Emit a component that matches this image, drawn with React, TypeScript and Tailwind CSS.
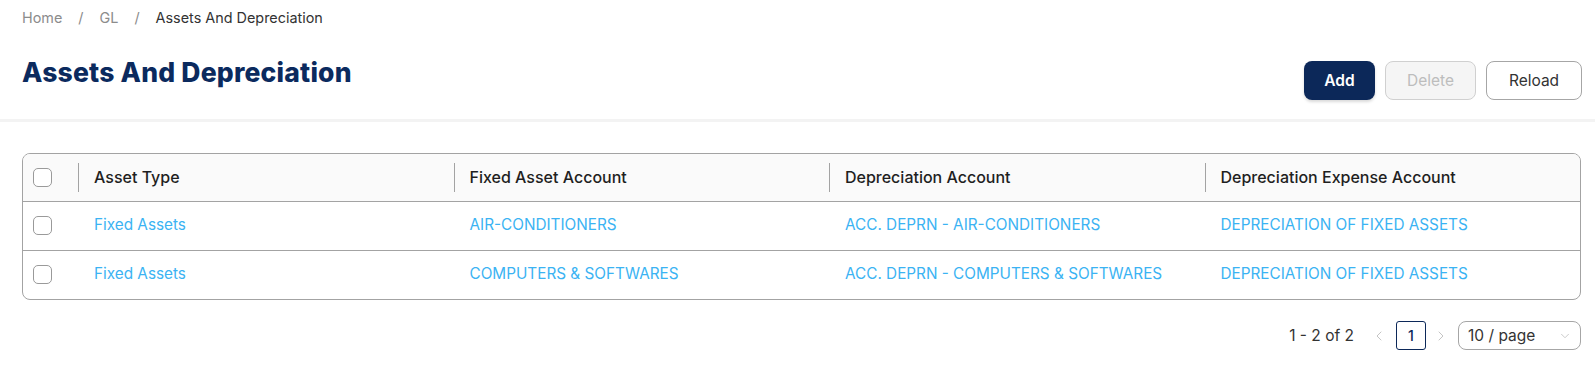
import { ChevronLeft, ChevronRight, ChevronDown } from 'lucide-react';

const rows = [
  {
    type: 'Fixed Assets',
    fixed: 'AIR-CONDITIONERS',
    deprn: 'ACC. DEPRN - AIR-CONDITIONERS',
    expense: 'DEPRECIATION OF FIXED ASSETS',
  },
  {
    type: 'Fixed Assets',
    fixed: 'COMPUTERS & SOFTWARES',
    deprn: 'ACC. DEPRN - COMPUTERS & SOFTWARES',
    expense: 'DEPRECIATION OF FIXED ASSETS',
  },
];

const columns = ['Asset Type', 'Fixed Asset Account', 'Depreciation Account', 'Depreciation Expense Account'];

function Checkbox() {
  return <div className="w-[19px] h-[19px] rounded-[5px] border border-[#9a9a9a] bg-white" />;
}

function App() {
  return (
    <div className="w-full min-h-screen bg-white text-[#1f1f1f]" style={{ fontFamily: 'Inter, "Open Sans", sans-serif' }}>
      {/* Page header */}
      <header className="h-[122px] border-b-[3px] border-[#f3f3f3] pl-[22px] pr-[13px] pt-[8px]">
        <nav className="flex items-center h-[20px] text-[14.4px]">
          <span className="text-[#8c8c8c]">Home</span>
          <span className="mx-[16px] text-[#8c8c8c]">/</span>
          <span className="text-[#8c8c8c]">GL</span>
          <span className="mx-[16px] text-[#8c8c8c]">/</span>
          <span className="text-[#333]">Assets And Depreciation</span>
        </nav>
        <div className="flex items-start justify-between mt-[28px]">
          <h1 className="text-[26.5px] leading-[32px] font-extrabold text-[#0b2a5e] tracking-[0.2px]">
            Assets And Depreciation
          </h1>
          <div className="flex gap-[10px] mt-[5px]">
            <button className="w-[71px] h-[39px] rounded-lg bg-[#0c2859] text-white text-[15.5px] font-semibold shadow-[0_2px_3px_rgba(0,0,0,0.15)]">
              Add
            </button>
            <button className="w-[91px] h-[39px] rounded-lg bg-[#f5f5f5] border border-[#d0d0d0] text-[#bdbdbd] text-[15.5px]">
              Delete
            </button>
            <button className="w-[96px] h-[39px] rounded-lg bg-white border border-[#a6a6a6] text-[#333] text-[15.5px]">
              Reload
            </button>
          </div>
        </div>
      </header>

      {/* Table */}
      <main className="pl-[22px] pr-[14px] pt-[31px]">
        <div className="rounded-lg border border-[#a3a3a3] overflow-hidden">
          <table className="w-full table-fixed border-collapse">
            <colgroup>
              <col className="w-[55px]" />
              <col />
              <col />
              <col />
              <col />
            </colgroup>
            <thead>
              <tr className="h-[47px] bg-[#fafafa] border-b border-[#a3a3a3]">
                <th className="pl-[10px] align-middle">
                  <Checkbox />
                </th>
                {columns.map((c) => (
                  <th key={c} className="p-0 align-middle text-left font-medium text-[16px] text-[#1f1f1f]">
                    <div className="flex items-center">
                      <div className="h-[29px] border-l border-[#a3a3a3]" />
                      <span className="pl-[15px]">{c}</span>
                    </div>
                  </th>
                ))}
              </tr>
            </thead>
            <tbody>
              {rows.map((r, i) => (
                <tr key={i} className={`h-[49px] ${i > 0 ? 'border-t border-[#a3a3a3]' : ''}`}>
                  <td className="pl-[10px] align-middle">
                    <Checkbox />
                  </td>
                  {[r.type, r.fixed, r.deprn, r.expense].map((v, j) => (
                    <td key={j} className="pl-[16px] align-middle text-[15.3px] text-[#3bb3f3]">
                      {v}
                    </td>
                  ))}
                </tr>
              ))}
            </tbody>
          </table>
        </div>

        {/* Pagination */}
        <div className="flex items-center justify-end mt-[21px] text-[15.5px] text-[#333]">
          <span className="mr-[17px]">1 - 2 of 2</span>
          <ChevronLeft className="w-[16px] h-[16px] text-[#c4c4c4] mr-[9px]" strokeWidth={1.5} />
          <div className="w-[30px] h-[29px] rounded-[3px] border border-[#0c2859] flex items-center justify-center text-[#0c2859] text-[14px] font-medium">
            1
          </div>
          <ChevronRight className="w-[16px] h-[16px] text-[#c4c4c4] ml-[7px] mr-[9px]" strokeWidth={1.5} />
          <div className="w-[123px] h-[29px] rounded-lg border border-[#a6a6a6] flex items-center justify-between pl-[9px] pr-[8px]">
            <span>10 / page</span>
            <ChevronDown className="w-[14px] h-[14px] text-[#c4c4c4]" strokeWidth={1.5} />
          </div>
        </div>
      </main>
    </div>
  );
}

export default App;
